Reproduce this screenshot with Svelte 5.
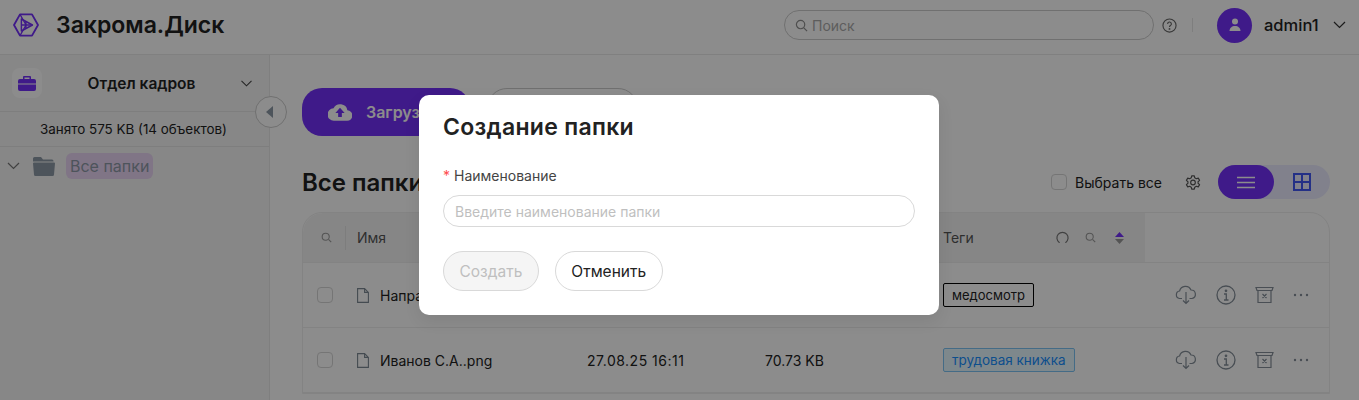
<script>
  const rows = [
    { name: 'Направление.pdf', date: '27.08.25 16:11', size: '70.73 KB', tag: 'медосмотр', tagClass: 'plain' },
    { name: 'Иванов С.А..png', date: '27.08.25 16:11', size: '70.73 KB', tag: 'трудовая книжка', tagClass: 'blue' }
  ];
</script>

<div class="page">
  <header class="topbar">
    <svg class="logo" width="28" height="24" viewBox="0 0 28 26" fill="none" stroke="#7430fa" stroke-width="2" stroke-linejoin="round">
      <path d="M7.500 1.500h13L27 13l-6.500 11.500h-13L1 13z" />
      <path d="M9 6.500L21 13 9 19.500z" stroke-width="1.600" />
      <path d="M7.500 1.500L14 13 7.500 24.500M9 13h12M14 9v8" stroke-width="1.400" />
    </svg>
    <div class="brand">Закрома.Диск</div>
    <div class="search">
      <svg width="13" height="13" viewBox="0 0 14 14" fill="none" stroke="#8f8f8f" stroke-width="1.300"><circle cx="6" cy="6" r="4.500" /><path d="M9.500 9.500L13 13" /></svg>
      <span>Поиск</span>
    </div>
    <svg class="help" width="15" height="15" viewBox="0 0 16 16" fill="none" stroke="#666" stroke-width="1.200">
      <circle cx="8" cy="8" r="7" />
      <path d="M6 6.300a2 2 0 1 1 3 1.700c-.7.400-1 .8-1 1.500" />
      <circle cx="8" cy="11.600" r=".4" />
    </svg>
    <div class="sep"></div>
    <div class="avatar">
      <svg width="16" height="16" viewBox="0 0 16 16" fill="#fff"><circle cx="8" cy="4.500" r="3" /><path d="M2.500 14c0-3 2.400-5 5.500-5s5.500 2 5.500 5z" /></svg>
    </div>
    <div class="username">admin1</div>
    <svg class="chev" width="13" height="8" viewBox="0 0 13 8" fill="none" stroke="#333" stroke-width="1.200"><path d="M1 1l5.500 5.500L12 1" /></svg>
  </header>

  <div class="body">
    <aside class="sidebar">
      <div class="dept">
        <div class="dept-icon">
          <svg width="18" height="15" viewBox="0 0 18 15" fill="#7430fa"><path d="M6 0h6a1 1 0 0 1 1 1v2h3a2 2 0 0 1 2 2v2.500H0V5a2 2 0 0 1 2-2h3V1a1 1 0 0 1 1-1zm.5 1.500V3h5V1.500z" /><path d="M0 8.500h18V13a2 2 0 0 1-2 2H2a2 2 0 0 1-2-2z" /></svg>
        </div>
        <div class="dept-name">Отдел кадров</div>
        <svg width="11" height="7" viewBox="0 0 11 7" fill="none" stroke="#444" stroke-width="1.100"><path d="M.5.800l5 5 5-5" /></svg>
      </div>
      <div class="usage">Занято 575 KB (14 объектов)</div>
      <div class="tree">
        <svg width="13" height="8" viewBox="0 0 13 8" fill="none" stroke="#777" stroke-width="1.200"><path d="M1 1l5.500 5.500L12 1" /></svg>
        <svg class="folder" width="22" height="19" viewBox="0 0 22 19" fill="#8d99a6"><path d="M1.500 0h6.500l2 2.500h9a1.500 1.500 0 0 1 1.500 1.500v.5H0V1.500A1.500 1.500 0 0 1 1.500 0z" /><path d="M1 5.500h20a1 1 0 0 1 1 1L21 17.500a1.500 1.500 0 0 1-1.500 1.500h-17A1.500 1.500 0 0 1 1 17.500L0 6.500a1 1 0 0 1 1-1z" /></svg>
        <span class="tree-label">Все папки</span>
      </div>
      <button class="collapse" aria-label="Свернуть">
        <svg width="8" height="12" viewBox="0 0 8 12" fill="#8d99a6"><path d="M7 0v12L0 6z" /></svg>
      </button>
    </aside>

    <main class="content">
      <div class="actions">
        <button class="upload">
          <svg width="24" height="18" viewBox="0 0 26 19"><path fill="#fff" d="M21 7.600A8 8 0 0 0 6 5.500 6.500 6.500 0 0 0 6.500 19h14a5.700 5.700 0 0 0 .5-11.400z" /><path fill="#7430fa" d="M13 5l5 5.500h-3V15h-4v-4.500H8z" /></svg>
          <span>Загрузить</span>
        </button>
        <button class="new-folder">Создать папку</button>
      </div>

      <div class="title-row">
        <h2>Все папки</h2>
        <label class="select-all"><span class="box"></span>Выбрать все</label>
        <svg class="gear" width="16" height="17" viewBox="0 0 24 24" fill="none" stroke="#555" stroke-width="1.700" stroke-linejoin="round">
          <path d="M10 2h4l.6 3 2.400 1.400 2.900-1 2 3.400-2.300 2v2.400l2.300 2-2 3.400-2.900-1L14.600 19l-.6 3h-4l-.6-3L7 17.600l-2.900 1-2-3.400 2.300-2v-2.400l-2.300-2 2-3.400 2.900 1L9.400 5z" />
          <circle cx="12" cy="12" r="3.500" />
        </svg>
        <div class="view-switch">
          <div class="view active">
            <svg width="18" height="13" viewBox="0 0 18 13" stroke="#fff" stroke-width="1.700"><path d="M0 1.500h18M0 6.500h18M0 11.500h18" /></svg>
          </div>
          <div class="view">
            <svg width="18" height="18" viewBox="0 0 18 18" fill="none" stroke="#4358f5" stroke-width="2"><path d="M1 1h16v16H1zM9 1v16M1 9h16" /></svg>
          </div>
        </div>
      </div>

      <div class="table">
        <div class="row head">
          <div class="cell-check">
            <svg width="11" height="11" viewBox="0 0 14 14" fill="none" stroke="#999" stroke-width="1.400"><circle cx="6" cy="6" r="4.500" /><path d="M9.500 9.500L13 13" /></svg>
            <i></i>
          </div>
          <div>Имя</div>
          <div>Дата</div>
          <div>Размер</div>
          <div class="tags-head">
            <span>Теги</span>
            <svg class="reload" width="13" height="13" viewBox="0 0 14 14" fill="none" stroke="#777" stroke-width="1.300" stroke-linecap="round"><path d="M3.500 12.300A6 6 0 1 1 10.500 12.300" /></svg>
            <svg class="mini" width="11" height="11" viewBox="0 0 14 14" fill="none" stroke="#999" stroke-width="1.400"><circle cx="6" cy="6" r="4.500" /><path d="M9.500 9.500L13 13" /></svg>
            <svg class="sort" width="9" height="12" viewBox="0 0 9 12"><path fill="#7430fa" d="M4.500 0L9 5H0z" /><path fill="#999" d="M4.500 12L0 7h9z" /></svg>
          </div>
          <div class="head-rest"></div>
        </div>

        {#each rows as row}
          <div class="row">
            <div class="cell-check"><span class="box"></span></div>
            <div class="name">
              <svg width="12" height="15" viewBox="0 0 12 15" fill="none" stroke="#7d8994" stroke-width="1.100"><path d="M.6.600h7l3.800 3.800v10H.6zM7.600.600v3.800h3.800" /></svg>
              {row.name}
            </div>
            <div class="date">{row.date}</div>
            <div>{row.size}</div>
            <div><span class="tag {row.tagClass}">{row.tag}</span></div>
            <div class="row-icons">
              <svg width="22" height="20" viewBox="0 0 22 20" fill="none" stroke="#858f99" stroke-width="1.200"><path d="M7 13.500H4.500A3.800 3.800 0 0 1 4.600 6 6 6 0 0 1 16 5a4.300 4.300 0 0 1 1 8.500h-2.500" /><path d="M11 7V18.500M8 15.500l3 3 3-3" /></svg>
              <svg width="20" height="20" viewBox="0 0 20 20" fill="none" stroke="#858f99" stroke-width="1.300"><circle cx="10" cy="10" r="9" /><path d="M8 9h2.300v6M8 15h4.500" /><circle cx="10" cy="5.800" r=".7" /></svg>
              <svg width="19" height="18" viewBox="0 0 19 18" fill="none" stroke="#858f99" stroke-width="1.200"><path d="M1 1.500h17l-1 3H2zM3 4.500V16.500h13V4.500M7.500 8l4 4M11.500 8l-4 4" /></svg>
              <svg width="16" height="4" viewBox="0 0 16 4" fill="#858f99"><circle cx="2" cy="2" r="1.200" /><circle cx="8" cy="2" r="1.200" /><circle cx="14" cy="2" r="1.200" /></svg>
            </div>
          </div>
        {/each}
      </div>
    </main>
  </div>

  <div class="overlay"></div>

  <div class="modal">
    <h3>Создание папки</h3>
    <div class="field-label"><span class="req">*</span>Наименование</div>
    <input class="field" type="text" placeholder="Введите наименование папки" />
    <div class="modal-buttons">
      <button class="btn disabled" disabled>Создать</button>
      <button class="btn">Отменить</button>
    </div>
  </div>
</div>

<style>
  :global(body) {
    margin: 0;
    font-family: 'Inter', 'Noto Sans', sans-serif;
    color: #222;
    background: #fff;
  }

  .page {
    position: relative;
    height: 400px;
    overflow: hidden;
  }

  button {
    font-family: inherit;
  }

  .topbar {
    display: flex;
    align-items: center;
    height: 50px;
    border-bottom: 1px solid #eaeaea;
    padding: 0 13px 4px 12px;
    box-sizing: content-box;
  }

  .logo {
    flex: none;
  }

  .brand {
    margin-left: 16px;
    font-size: 23px;
    font-weight: 600;
    color: #222;
  }

  .search {
    display: flex;
    align-items: center;
    gap: 4px;
    height: 30px;
    margin-left: auto;
    padding-left: 10px;
    box-sizing: border-box;
    width: 370px;
    border: 1px solid #ccc;
    border-radius: 15px;
    color: #aaa;
    font-size: 14px;
  }

  .help {
    margin-left: 8px;
  }

  .sep {
    width: 1px;
    height: 14px;
    background: #e5e5e5;
    margin: 0 24px 0 15px;
  }

  .avatar {
    display: flex;
    align-items: center;
    justify-content: center;
    width: 35px;
    height: 35px;
    border-radius: 50%;
    background: #7430fa;
  }

  .username {
    width: 58px;
    margin: 0 11px 0 12px;
    font-size: 16.500px;
    font-weight: 500;
  }

  .body {
    display: flex;
    height: 345px;
  }

  .sidebar {
    position: relative;
    flex: none;
    width: 269px;
    background: #f6f6f6;
    border-right: 1px solid #e8e8e8;
  }

  .dept {
    display: flex;
    align-items: center;
    height: 56px;
    padding: 0 17px 0 12px;
    border-bottom: 1px solid #e6e6e6;
  }

  .dept-icon {
    display: flex;
    align-items: center;
    justify-content: center;
    width: 30px;
    height: 30px;
    border-radius: 8px;
    background: #fff;
  }

  .dept-name {
    flex: 1;
    text-align: center;
    font-size: 15.500px;
    font-weight: 600;
  }

  .usage {
    height: 34px;
    line-height: 34px;
    font-size: 13.400px;
    text-align: center;
    border-bottom: 1px solid #e6e6e6;
    padding-right: 2px;
  }

  .tree {
    display: flex;
    align-items: center;
    padding: 6px 0 0 7px;
  }

  .folder {
    margin-left: 13px;
  }

  .tree-label {
    margin-left: 11px;
    padding: 3px 4px;
    border-radius: 6px;
    background: #e9d5f5;
    color: #8d99a6;
    font-size: 16px;
  }

  .collapse {
    position: absolute;
    top: 41px;
    right: -18px;
    display: flex;
    align-items: center;
    justify-content: center;
    width: 32px;
    height: 32px;
    padding: 0 2px 0 0;
    border: 1px solid #ccc;
    border-radius: 50%;
    background: #fff;
  }

  .content {
    flex: 1;
    padding: 33px 29px 0 32px;
  }

  .actions {
    display: flex;
    gap: 17px;
  }

  .upload {
    display: flex;
    align-items: center;
    gap: 14px;
    width: 168px;
    height: 48px;
    padding: 0 0 0 26px;
    border: none;
    border-radius: 20px;
    background: #7430fa;
    color: #fff;
    font-size: 16px;
    font-weight: 600;
  }

  .new-folder {
    width: 151px;
    height: 48px;
    border: 1px solid #ccc;
    border-radius: 20px;
    background: #fff;
    font-size: 16px;
  }

  .title-row {
    display: flex;
    align-items: center;
    height: 34px;
    margin-top: 29px;
  }

  h2 {
    flex: 1;
    margin: 0;
    font-size: 24px;
    font-weight: 600;
  }

  .select-all {
    display: flex;
    align-items: center;
    gap: 8px;
    font-size: 14px;
  }

  .box {
    display: block;
    flex: none;
    box-sizing: border-box;
    width: 16px;
    height: 16px;
    border: 1px solid #d6d6d6;
    border-radius: 4px;
  }

  .gear {
    margin: 0 17px 0 23px;
  }

  .view-switch {
    display: flex;
    width: 112px;
    height: 34px;
    border-radius: 17px;
    background: #ebebff;
  }

  .view {
    display: flex;
    align-items: center;
    justify-content: center;
    width: 56px;
    border-radius: 17px;
  }

  .view.active {
    background: #7430fa;
  }

  .table {
    margin-top: 13px;
    border: 1px solid #eee;
    border-radius: 20px 20px 0 0;
  }

  .row {
    display: grid;
    grid-template-columns: 54px 230px 178px 178px 202px 1fr;
    align-items: center;
    height: 64px;
    border-bottom: 1px solid #eee;
    font-size: 14px;
  }

  .row.head {
    height: 49px;
    align-items: stretch;
    color: #555;
    font-size: 14px;
  }

  .row.head > div {
    display: flex;
    align-items: center;
    background: #f5f5f5;
  }

  .row.head > div:first-child {
    border-top-left-radius: 20px;
  }

  .row.head > .head-rest {
    background: none;
  }

  .cell-check {
    display: flex;
    align-items: center;
    padding-left: 14px;
  }

  .head .cell-check {
    padding-left: 18px;
  }

  .head .cell-check i {
    width: 1px;
    height: 24px;
    margin-left: 13px;
    background: #e3e3e3;
  }

  .tags-head .reload {
    margin-left: 82px;
  }

  .tags-head .mini {
    margin-left: 16px;
  }

  .tags-head .sort {
    margin-left: 19px;
  }

  .name {
    display: flex;
    align-items: center;
    gap: 11px;
  }

  .date {
    letter-spacing: 0.5px;
  }

  .tag {
    display: inline-block;
    padding: 3px 8px;
    border: 1px solid #000;
    border-radius: 2px;
    font-size: 13px;
    line-height: 16px;
  }

  .tag.blue {
    border-color: #7cc4f5;
    background: #e6f7ff;
    color: #1890ff;
    font-size: 13.500px;
  }

  .row-icons {
    display: flex;
    align-items: center;
    padding-left: 30px;
    gap: 19px;
  }

  .overlay {
    position: absolute;
    inset: 0;
    background: rgba(0, 0, 0, 0.45);
  }

  .modal {
    position: absolute;
    top: 95px;
    left: 419px;
    box-sizing: border-box;
    width: 520px;
    height: 220px;
    padding: 18px 24px;
    border-radius: 10px;
    background: #fff;
    box-shadow: 0 6px 16px rgba(0, 0, 0, 0.08);
  }

  h3 {
    margin: 0;
    font-size: 23px;
    line-height: 28px;
    font-weight: 600;
    letter-spacing: 0.3px;
    color: #222;
  }

  .field-label {
    margin-top: 24px;
    font-size: 14px;
    line-height: 22px;
    color: #444;
  }

  .req {
    margin-right: 4px;
    color: #ff4d4f;
  }

  .field {
    display: block;
    box-sizing: border-box;
    width: 472px;
    height: 32px;
    margin-top: 8px;
    padding: 0 11px;
    border: 1px solid #d9d9d9;
    border-radius: 16px;
    font-family: inherit;
    font-size: 14px;
    outline: none;
  }

  .field::placeholder {
    color: #bfbfbf;
  }

  .modal-buttons {
    display: flex;
    gap: 16px;
    margin-top: 24px;
  }

  .btn {
    height: 40px;
    padding: 0 15.500px;
    border: 1px solid #d9d9d9;
    border-radius: 20px;
    background: #fff;
    color: #222;
    font-size: 15.500px;
  }

  .btn.disabled {
    background: #f5f5f5;
    color: #bfbfbf;
  }
</style>
